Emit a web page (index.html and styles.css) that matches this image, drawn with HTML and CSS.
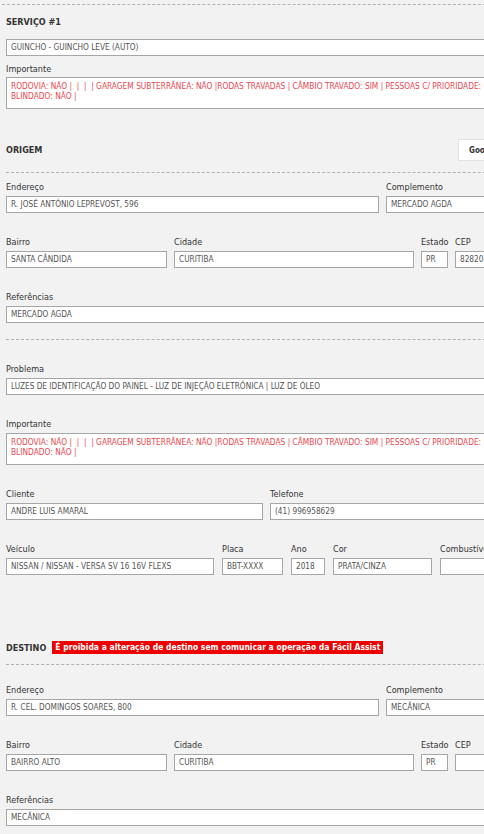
FILE: index.html
```html
<!DOCTYPE html>
<html lang="pt-BR">
<head>
<meta charset="utf-8">
<title>Serviço</title>
<link rel="stylesheet" href="styles.css">
</head>
<body>
<div class="page">
  <div class="sep sep-top"></div>

  <h2 class="title t-servico">SERVIÇO #1</h2>
  <div class="box b-servico">GUINCHO - GUINCHO LEVE (AUTO)</div>
  <div class="label l-imp">Importante</div>
  <div class="box area">RODOVIA: NÃO |&nbsp; |&nbsp; |&nbsp; | GARAGEM SUBTERRÂNEA: NÃO |RODAS TRAVADAS | CÂMBIO TRAVADO: SIM | PESSOAS C/ PRIORIDADE: NÃO | CRIANÇAS: NÃO |<br>BLINDADO: NÃO |</div>

  <div class="sec-head h-origem">
    <h2 class="title head-title">ORIGEM</h2>
    <button class="maps-btn" type="button">Google Maps</button>
  </div>
  <div class="sep s-origem"></div>

  <div class="row r-first">
    <div class="field w-end"><div class="label">Endereço</div><div class="box">R. JOSÉ ANTÔNIO LEPREVOST, 596</div></div>
    <div class="field grow"><div class="label">Complemento</div><div class="box">MERCADO AGDA</div></div>
  </div>
  <div class="row">
    <div class="field w-bairro"><div class="label">Bairro</div><div class="box">SANTA CÂNDIDA</div></div>
    <div class="field w-cidade"><div class="label">Cidade</div><div class="box">CURITIBA</div></div>
    <div class="field w-uf"><div class="label">Estado</div><div class="box">PR</div></div>
    <div class="field grow"><div class="label">CEP</div><div class="box">82820-160</div></div>
  </div>
  <div class="row">
    <div class="field grow"><div class="label">Referências</div><div class="box">MERCADO AGDA</div></div>
  </div>
  <div class="sep s-mid"></div>

  <div class="row r-problema">
    <div class="field grow"><div class="label">Problema</div><div class="box">LUZES DE IDENTIFICAÇÃO DO PAINEL - LUZ DE INJEÇÃO ELETRÔNICA | LUZ DE ÓLEO</div></div>
  </div>
  <div class="row">
    <div class="field grow"><div class="label">Importante</div><div class="box area">RODOVIA: NÃO |&nbsp; |&nbsp; |&nbsp; | GARAGEM SUBTERRÂNEA: NÃO |RODAS TRAVADAS | CÂMBIO TRAVADO: SIM | PESSOAS C/ PRIORIDADE: NÃO | CRIANÇAS: NÃO |<br>BLINDADO: NÃO |</div></div>
  </div>
  <div class="row">
    <div class="field w-cliente"><div class="label">Cliente</div><div class="box">ANDRE LUIS AMARAL</div></div>
    <div class="field grow"><div class="label">Telefone</div><div class="box">(41) 996958629</div></div>
  </div>
  <div class="row row-veic">
    <div class="field w-veic"><div class="label">Veículo</div><div class="box">NISSAN / NISSAN - VERSA SV 16 16V FLEXS</div></div>
    <div class="field w-placa"><div class="label">Placa</div><div class="box">BBT-XXXX</div></div>
    <div class="field w-ano"><div class="label">Ano</div><div class="box">2018</div></div>
    <div class="field w-cor"><div class="label">Cor</div><div class="box">PRATA/CINZA</div></div>
    <div class="field grow"><div class="label">Combustível</div><div class="box"></div></div>
  </div>

  <div class="sec-head h-destino">
    <h2 class="title">DESTINO</h2>
    <span class="warn">É proibida a alteração de destino sem comunicar a operação da Fácil Assist</span>
  </div>
  <div class="sep s-destino"></div>

  <div class="row r-dest-first">
    <div class="field w-end"><div class="label">Endereço</div><div class="box">R. CEL. DOMINGOS SOARES, 800</div></div>
    <div class="field grow"><div class="label">Complemento</div><div class="box">MECÂNICA</div></div>
  </div>
  <div class="row">
    <div class="field w-bairro"><div class="label">Bairro</div><div class="box">BAIRRO ALTO</div></div>
    <div class="field w-cidade"><div class="label">Cidade</div><div class="box">CURITIBA</div></div>
    <div class="field w-uf"><div class="label">Estado</div><div class="box">PR</div></div>
    <div class="field grow"><div class="label">CEP</div><div class="box"></div></div>
  </div>
  <div class="row">
    <div class="field grow"><div class="label">Referências</div><div class="box">MECÂNICA</div></div>
  </div>
</div>
</body>
</html>
```

FILE: styles.css
```css
html, body {
  margin: 0;
  padding: 0;
  background: #f2f2f2;
  overflow: hidden;
}

body {
  font-family: "DejaVu Sans Condensed", "DejaVu Sans", sans-serif;
  font-stretch: condensed;
  color: #333;
}

.page {
  width: 540px;
  padding-left: 6px;
}

.sep {
  height: 0;
  border-top: 1px dashed #b0b0b0;
}

.sep-top {
  margin-top: 4px;
  margin-left: -4px;
}

.title {
  margin: 0;
  font-size: 9px;
  line-height: 12px;
  font-weight: bold;
  color: #333;
}

.t-servico { margin-top: 11px; }

.label {
  display: block;
  font-size: 9px;
  line-height: 12px;
  height: 12px;
  margin-bottom: 3px;
  color: #333;
  white-space: nowrap;
}

.box {
  box-sizing: border-box;
  height: 17px;
  line-height: 15px;
  padding: 0 4px;
  border: 1px solid #a6a6a6;
  background: #fff;
  color: #555;
  font-size: 8.2px;
  white-space: nowrap;
  overflow: hidden;
}

.b-servico { margin-top: 11px; }

.l-imp {
  margin-top: 7px;
  margin-bottom: 2px;
}

.area {
  height: 32px;
  line-height: 10px;
  padding: 3px 4px;
  font-size: 8.3px;
  color: #e8474f;
}

.sec-head {
  display: flex;
  align-items: center;
}

.h-origem {
  margin-top: 30px;
  height: 22px;
}

.head-title { flex: 0 0 452px; }

.maps-btn {
  height: 22px;
  padding: 0 10px;
  border: 1px solid #e2e2e2;
  background: #fff;
  font-family: inherit;
  font-stretch: condensed;
  font-size: 8px;
  font-weight: bold;
  color: #333;
  white-space: nowrap;
}

.s-origem { margin-top: 11px; }

.row {
  display: flex;
  gap: 7px;
  margin-top: 23px;
}

.r-first { margin-top: 8px; }
.r-problema { margin-top: 23px; }

.s-mid { margin-top: 16px; }

.field { min-width: 0; }
.grow { flex: 1 1 0; }

.w-end { flex: 0 0 373px; }
.w-bairro { flex: 0 0 161px; }
.w-cidade { flex: 0 0 240px; }
.w-uf { flex: 0 0 27px; }
.w-cliente { flex: 0 0 257px; }

.row-veic { gap: 8px; }
.w-veic { flex: 0 0 208px; }
.w-placa { flex: 0 0 61px; }
.w-ano { flex: 0 0 34px; }
.w-cor { flex: 0 0 99px; }

.h-destino {
  margin-top: 66px;
  height: 13px;
}

.warn {
  margin-left: 6px;
  padding: 0 3px;
  background: #ee0000;
  color: #fff;
  font-size: 8.5px;
  font-weight: bold;
  line-height: 13px;
  white-space: nowrap;
}

.s-destino { margin-top: 10px; }

.r-dest-first { margin-top: 19px; }
```
